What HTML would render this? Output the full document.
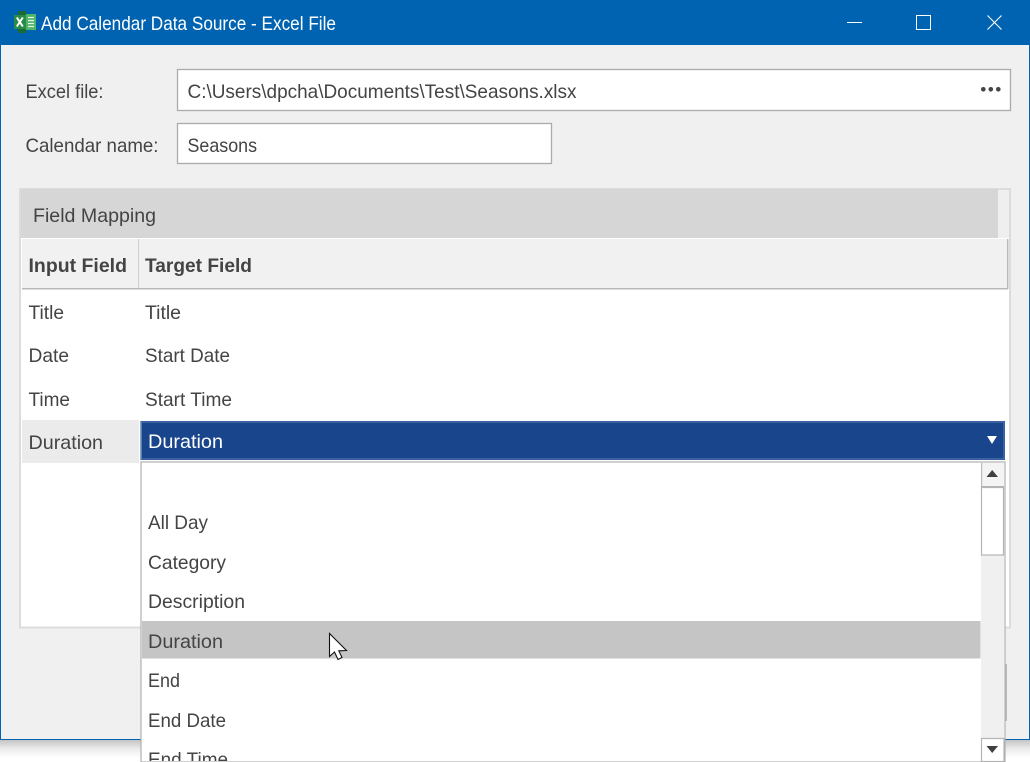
<!DOCTYPE html>
<html><head><meta charset="utf-8"><title>Add Calendar Data Source - Excel File</title>
<style>
html,body{margin:0;padding:0;background:#fff;width:1030px;height:762px;overflow:hidden}
svg{display:block}
text{font-family:"Liberation Sans",Arial,sans-serif;font-size:19.5px;fill:#444;}
.b{font-weight:bold}
</style></head><body>
<svg width="1030" height="762" viewBox="0 0 1030 762" xmlns="http://www.w3.org/2000/svg">
<defs>
<linearGradient id="sh" x1="0" y1="0" x2="0" y2="1"><stop offset="0" stop-color="#c4c4c4"/><stop offset=".5" stop-color="#ececec"/><stop offset="1" stop-color="#fff"/></linearGradient>
<clipPath id="list"><rect x="142" y="463" width="839" height="298"/></clipPath>
</defs>
<rect x="0" y="740" width="1030" height="18" fill="url(#sh)"/>
<!-- window -->
<rect x="0" y="0" width="1030" height="740" fill="#0063b1"/>
<rect x="1" y="45" width="1028" height="694" fill="#f0f0f0"/>
<!-- excel icon -->
<rect x="25" y="14" width="11" height="16" fill="#4fb56a"/>
<path d="M18 11 H26 V33 H18 Z" fill="#1a6a36"/>
<rect x="14" y="15" width="12" height="14" fill="#2a8a48"/>
<path d="M16.800 17.500 L22.800 26.500 M22.800 17.500 L16.800 26.500" stroke="#fff" stroke-width="2" fill="none"/>
<path d="M28 17.500 H34 M28 20.500 H34 M28 23.500 H34 M28 26.500 H34" stroke="#e4f5e8" stroke-width="1.200"/>
<text x="41" y="30" textLength="295" lengthAdjust="spacingAndGlyphs" style="fill:#fff">Add Calendar Data Source - Excel File</text>
<!-- window controls -->
<rect x="847" y="22" width="15" height="1" fill="#fff"/>
<rect x="916.500" y="15.500" width="14" height="14" fill="none" stroke="#fff" stroke-width="1"/>
<path d="M987.500 15.500 L1001.500 29.500 M1001.500 15.500 L987.500 29.500" stroke="#fff" stroke-width="1.100" fill="none"/>
<!-- excel file -->
<text x="25.500" y="98" textLength="78" lengthAdjust="spacingAndGlyphs">Excel file:</text>
<rect x="177.500" y="69.500" width="833" height="41" fill="#fff" stroke="#ababab" stroke-width="1.300"/>
<text x="187.500" y="98" textLength="389" lengthAdjust="spacingAndGlyphs">C:\Users\dpcha\Documents\Test\Seasons.xlsx</text>
<circle cx="983.300" cy="89.300" r="2.300" fill="#444"/><circle cx="990.800" cy="89.300" r="2.300" fill="#444"/><circle cx="998.300" cy="89.300" r="2.300" fill="#444"/>
<!-- calendar name -->
<text x="25.500" y="152" textLength="133" lengthAdjust="spacingAndGlyphs">Calendar name:</text>
<rect x="177.500" y="123.500" width="374" height="40" fill="#fff" stroke="#ababab" stroke-width="1.300"/>
<text x="187.500" y="152" textLength="69.500" lengthAdjust="spacingAndGlyphs">Seasons</text>
<!-- group -->
<rect x="20" y="189" width="990" height="438.500" fill="#fff" stroke="#dcdcdc" stroke-width="2"/>
<rect x="21" y="189" width="977" height="49" fill="#d6d6d6"/>
<rect x="998" y="190" width="11" height="48" fill="#efefef"/>
<text x="33" y="222" textLength="123" lengthAdjust="spacingAndGlyphs">Field Mapping</text>
<!-- header -->
<rect x="22" y="239" width="986" height="50" fill="#f1f1f1"/>
<rect x="22" y="288" width="986" height="1.500" fill="#b8b8b8"/>
<rect x="1007" y="239" width="1.500" height="50" fill="#b8b8b8"/>
<rect x="138" y="239" width="1" height="49" fill="#cfcfcf"/>
<text class="b" x="28.500" y="272" textLength="98.500" lengthAdjust="spacingAndGlyphs">Input Field</text>
<text class="b" x="145" y="272" textLength="107" lengthAdjust="spacingAndGlyphs">Target Field</text>
<!-- rows -->
<text x="28.500" y="319" textLength="35.500" lengthAdjust="spacingAndGlyphs">Title</text>
<text x="145" y="319" textLength="36" lengthAdjust="spacingAndGlyphs">Title</text>
<text x="28.500" y="362" textLength="40.500" lengthAdjust="spacingAndGlyphs">Date</text>
<text x="145" y="362" textLength="85" lengthAdjust="spacingAndGlyphs">Start Date</text>
<text x="28.500" y="406" textLength="41.500" lengthAdjust="spacingAndGlyphs">Time</text>
<text x="145" y="406" textLength="87" lengthAdjust="spacingAndGlyphs">Start Time</text>
<rect x="22" y="420" width="117" height="43" fill="#ebebeb"/>
<text x="28.500" y="449" textLength="74.500" lengthAdjust="spacingAndGlyphs">Duration</text>
<!-- combobox -->
<rect x="140.500" y="421" width="864.500" height="39" fill="#18458b"/>
<rect x="141.500" y="422" width="862.500" height="37" fill="none" stroke="#5b7fb5" stroke-width="1"/>
<text x="148" y="448" textLength="75" lengthAdjust="spacingAndGlyphs" style="fill:#fff">Duration</text>
<path d="M987 436 H997 L992 444 Z" fill="#fff"/>
<!-- button behind dropdown -->
<rect x="1005" y="664" width="2" height="57" fill="#b9b9b9"/>
<!-- dropdown -->
<rect x="141" y="462" width="864" height="300" fill="#fff" stroke="#b0b0b0" stroke-width="1.200"/>
<rect x="981" y="463" width="23" height="298" fill="#f0f0f0"/>
<rect x="981" y="463" width="23" height="23" fill="#f4f4f4"/>
<rect x="981" y="463" width="1.200" height="24" fill="#bbb"/>
<rect x="981" y="486" width="23" height="1.500" fill="#b4b4b4"/>
<path d="M986.500 477 H998 L992.200 470 Z" fill="#404040"/>
<rect x="981.500" y="487.500" width="22" height="67.500" fill="#fff" stroke="#b4b4b4" stroke-width="1.200"/>
<rect x="981.500" y="738.500" width="22.500" height="23" fill="#fff" stroke="#b4b4b4" stroke-width="1.200"/>
<path d="M986.500 746 H998 L992.200 753 Z" fill="#404040"/>
<rect x="142" y="621" width="838.500" height="37.500" fill="#c5c5c5"/>
<g clip-path="url(#list)">
<text x="148" y="529" textLength="60" lengthAdjust="spacingAndGlyphs">All Day</text>
<text x="148" y="569" textLength="78" lengthAdjust="spacingAndGlyphs">Category</text>
<text x="148" y="608" textLength="97" lengthAdjust="spacingAndGlyphs">Description</text>
<text x="148" y="648" textLength="75" lengthAdjust="spacingAndGlyphs">Duration</text>
<text x="148" y="687" textLength="32" lengthAdjust="spacingAndGlyphs">End</text>
<text x="148" y="727" textLength="78" lengthAdjust="spacingAndGlyphs">End Date</text>
<text x="148" y="766" textLength="80" lengthAdjust="spacingAndGlyphs">End Time</text>
</g>
<!-- cursor -->
<path d="M329.500 633.500 V656.500 L334.500 652 L338 659.500 L342 657.500 L338.800 650.800 L346.500 650.500 Z" fill="#fff" stroke="#111" stroke-width="1.100" stroke-linejoin="miter"/>
</svg>
</body></html>
